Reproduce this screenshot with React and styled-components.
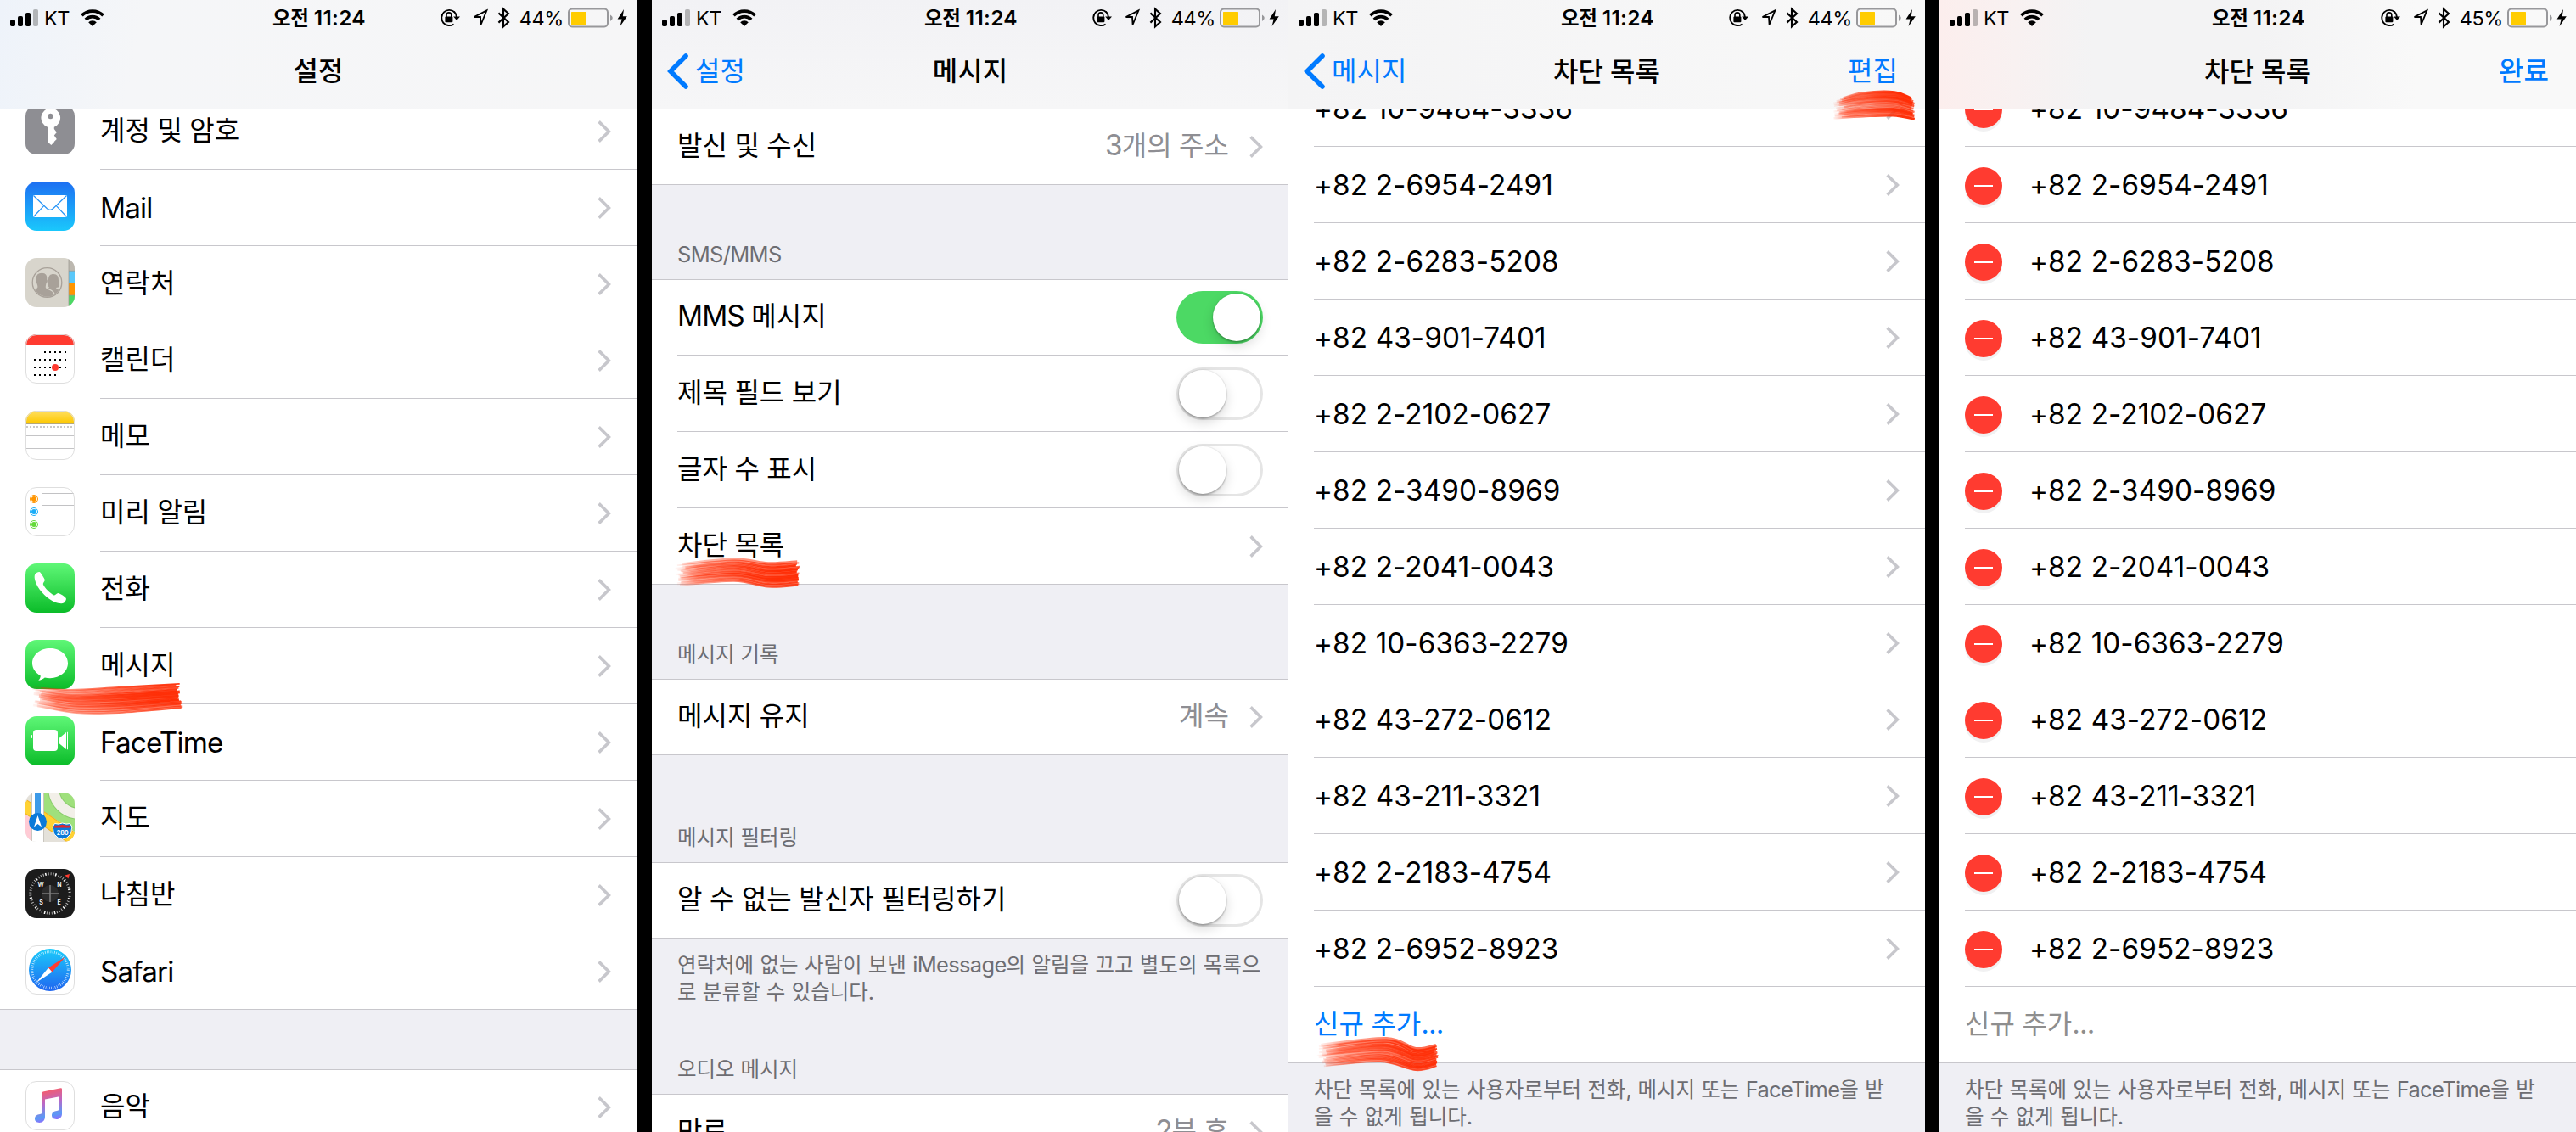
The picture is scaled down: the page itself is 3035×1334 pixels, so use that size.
import React from "react";
import styled, { createGlobalStyle, css } from "styled-components";

const GlobalStyle = createGlobalStyle`
  body { margin: 0; background: #000; overflow: hidden; }
  *, *::before, *::after { box-sizing: border-box; }
`;

const separator = "#c8c7cc";

const Board = styled.main`
  position: relative;
  display: grid;
  grid-template-columns: 750px 18px 750px 750px 17px 750px;
  width: 3035px;
  height: 1334px;
  overflow: hidden;
  background: #000;
  color: #000;
  font-family: Inter, "Noto Sans CJK KR", sans-serif;
  -webkit-font-smoothing: antialiased;
`;

const Phone = styled.section`
  grid-column: ${(p) => p.$column};
  display: flex;
  flex-direction: column;
  height: 1334px;
  overflow: hidden;
  background: #efeff4;
`;

const Header = styled.header`
  flex: none;
  display: flex;
  flex-direction: column;
  height: 129px;
  border-bottom: 1px solid ${(p) => p.$line || "#a9a9ac"};
  background: ${(p) => p.$tint};
  z-index: 1;
`;

const StatusRow = styled.div`
  display: grid;
  grid-template-columns: 1fr auto 1fr;
  height: 40px;
  padding: 0 10px 0 12px;
  align-items: center;
  font-size: 23.5px;
  line-height: 40px;
`;

const StatusSide = styled.div`
  display: flex;
  align-items: center;
  height: 40px;
  justify-content: ${(p) => (p.$end ? "flex-end" : "flex-start")};
  svg { flex: none; display: block; }
`;

const Carrier = styled.span`
  margin: 1px 13px 0 7px;
  font-size: 23.5px;
  letter-spacing: -0.6px;
`;

const Clock = styled.span`
  padding-top: 1px;
  font-weight: 600;
  font-size: 23.5px;
  white-space: nowrap;
`;

const Percent = styled.span`
  margin: 1px 5px 0 10px;
  letter-spacing: -0.4px;
  font-size: 23.5px;
`;

const NavRow = styled.div`
  display: grid;
  grid-template-columns: 1fr auto 1fr;
  align-items: center;
  height: 88px;
  padding: 0 32px 0 18px;
`;

const NavTitle = styled.h1`
  margin: 0 -7px 0 7px;
  font-size: 32px;
  font-weight: 500;
  line-height: 40px;
`;

const NavLink = styled.span`
  display: flex;
  align-items: center;
  gap: 8px;
  justify-self: ${(p) => (p.$end ? "end" : "start")};
  color: #007aff;
  font-size: 32px;
  line-height: 40px;
  font-weight: ${(p) => (p.$strong ? 500 : 400)};
`;

const Scroll = styled.div`
  flex: 1;
  min-height: 0;
  display: flex;
  flex-direction: column;
  overflow: hidden;
`;

const List = styled.div`
  flex: none;
  background: #fff;
  margin-top: ${(p) => p.$shift || 0}px;
  ${(p) => p.$ruled && css`box-shadow: inset 0 1px ${separator};`}
`;

const Row = styled.div`
  display: flex;
  height: 90px;
  padding-left: 30px;
  &:last-child { box-shadow: inset 0 -1px ${separator}; }
`;

const RowLead = styled.div`
  flex: none;
  width: ${(p) => p.$width}px;
  padding-top: ${(p) => p.$top}px;
  svg { display: block; }
`;

const RowBody = styled.div`
  flex: 1;
  display: flex;
  align-items: center;
  padding-right: 30px;
  box-shadow: inset 0 -1px ${separator};
  ${Row}:last-child & { box-shadow: none; }
`;

const Label = styled.span`
  flex: 1;
  font-size: 32px;
  line-height: 44px;
  white-space: nowrap;
  padding-bottom: ${(p) => (p.$plain ? 0 : 3)}px;
  color: ${(p) => p.$color || "#000"};
`;

const Value = styled.span`
  margin-right: 24px;
  padding-bottom: 3px;
  color: #8e8e93;
  font-size: 32px;
  line-height: 44px;
`;

const Gap = styled.div`
  flex: none;
  height: ${(p) => p.$height}px;
`;

const SectionHead = styled.h2`
  flex: none;
  display: flex;
  align-items: flex-end;
  height: ${(p) => p.$height}px;
  margin: 0;
  padding: 0 30px 13px;
  color: #6d6d72;
  font-size: 24.5px;
  font-weight: 400;
  line-height: 32px;
`;

const Note = styled.p`
  flex: none;
  height: ${(p) => p.$height}px;
  margin: 0;
  padding: 15px 0 0 30px;
  color: #6d6d72;
  font-size: 24.5px;
  line-height: 32px;
  word-spacing: 0.8px;
  white-space: nowrap;
`;

const Track = styled.span`
  flex: none;
  display: flex;
  justify-content: ${(p) => (p.$on ? "flex-end" : "flex-start")};
  width: 102px;
  height: 62px;
  padding: 3px;
  border-radius: 31px;
  background: ${(p) => (p.$on ? "#4cd964" : "#fff")};
  box-shadow: ${(p) => (p.$on ? "none" : "inset 0 0 0 3px #e5e5e5")};
`;

const Knob = styled.span`
  width: 56px;
  height: 56px;
  border-radius: 50%;
  background: #fff;
  box-shadow: 0 6px 14px rgba(0, 0, 0, 0.15), 0 2px 2px rgba(0, 0, 0, 0.2), 0 0 1px 1px rgba(0, 0, 0, 0.06);
`;

const Hangul = styled.span`
  letter-spacing: ${(p) => p.$spacing || "0"};
`;

const Latin = styled.span`
  font-size: 1.04em;
  letter-spacing: ${(p) => p.$spacing || "-0.026em"};
`;

const Annotations = styled.svg`
  position: absolute;
  inset: 0;
  z-index: 2;
  pointer-events: none;
`;

function Mixed({ text, latin, hangul }) {
  return text.split(/([가-힣]+)/).filter(Boolean).map((run, i) =>
    /[가-힣]/.test(run)
      ? <Hangul key={i} $spacing={hangul}>{run}</Hangul>
      : <Latin key={i} $spacing={latin}>{run}</Latin>
  );
}

/* ---------- status bar ---------- */

function Signal() {
  return (
    <svg width="33" height="20" viewBox="0 0 33 20">
      <rect x="0" y="12" width="6" height="8" rx="1.8" />
      <rect x="9" y="8" width="6" height="12" rx="1.8" />
      <rect x="18" y="4" width="6" height="16" rx="1.8" />
      <rect x="27" y="0" width="6" height="20" rx="1.8" opacity="0.26" />
    </svg>
  );
}

function Wifi() {
  return (
    <svg width="28" height="20" viewBox="0 0 28 20" fill="none" stroke="#000" strokeWidth="3.8">
      <path d="M1.4 7.2 A18 18 0 0 1 26.6 7.2" />
      <path d="M5.9 12 A11.6 11.6 0 0 1 22.1 12" />
      <path d="M14 20 L9.2 15.2 A6.8 6.8 0 0 1 18.8 15.2 Z" fill="#000" stroke="none" />
    </svg>
  );
}

function StatusIcons() {
  return (
    <svg width="84" height="26" viewBox="0 0 84 26">
      <path d="M17.4 6.2 A9.1 9.1 0 1 0 16.6 20.4" fill="none" stroke="#000" strokeWidth="1.9" />
      <path d="M17 5.8 A9.1 9.1 0 0 1 19.9 12" fill="none" stroke="#000" strokeWidth="1.9" />
      <path d="M16.2 11.6 H24 L20.1 16 Z" />
      <rect x="6.4" y="11.4" width="9" height="6.8" rx="1" />
      <path d="M8 12 V9.8 A2.9 2.9 0 0 1 13.8 9.8 V12" fill="none" stroke="#000" strokeWidth="1.6" />
      <path d="M55.4 4.4 L40.5 12 H48 L48.6 21 Z" fill="none" stroke="#000" strokeWidth="1.8" strokeLinejoin="miter" />
      <path d="M69.4 7.4 L81 18 L75 23.4 V2.6 L81 8 L69.4 18.6" fill="none" stroke="#000" strokeWidth="2.1" />
    </svg>
  );
}

function Battery() {
  return (
    <svg width="71" height="24" viewBox="0 0 71 24">
      <rect x="1" y="1.5" width="46" height="21" rx="4" fill="none" stroke="#98989b" strokeWidth="2" />
      <path d="M50 8.5 Q52.8 10 52.8 12.1 Q52.8 14.300 50 15.900 Z" fill="#98989b" />
      <rect x="4" y="5" width="18" height="15" rx="0.5" fill="#ffcc00" />
      <path d="M66 2 L58.6 13.400 H63.6 L61.6 22 L69.8 10.200 H64.8 Z" />
    </svg>
  );
}

function TopBar({ title, back, action, strong, percent, tint, line }) {
  return (
    <Header $tint={tint} $line={line}>
      <StatusRow>
        <StatusSide>
          <Signal />
          <Carrier>KT</Carrier>
          <Wifi />
        </StatusSide>
        <Clock><Mixed text="오전 11:24" latin="0.012em" hangul="-0.02em" /></Clock>
        <StatusSide $end>
          <StatusIcons />
          <Percent>{percent}%</Percent>
          <Battery />
        </StatusSide>
      </StatusRow>
      <NavRow>
        {back ? (
          <NavLink>
            <svg width="25" height="42" viewBox="0 0 25 42">
              <path d="M22 3 L4 21 L22 39" fill="none" stroke="#007aff" strokeWidth="5.6" strokeLinecap="round" strokeLinejoin="miter" />
            </svg>
            {back}
          </NavLink>
        ) : <span />}
        <NavTitle><Mixed text={title} /></NavTitle>
        {action ? <NavLink $end $strong={strong}>{action}</NavLink> : <span />}
      </NavRow>
    </Header>
  );
}

/* ---------- list pieces ---------- */

function Chevron() {
  return (
    <svg width="16" height="26" viewBox="0 0 16 26">
      <path d="M1.6 1.4 L13.4 13 L1.6 24.6" fill="none" stroke="#c7c7cc" strokeWidth="3.6" />
    </svg>
  );
}

function Toggle({ on }) {
  return <Track $on={on}><Knob /></Track>;
}

function Remove() {
  return (
    <svg width="48" height="54" viewBox="0 0 48 54">
      <circle cx="22" cy="26" r="22" fill="#f1f1f2" />
      <circle cx="22" cy="22" r="22" fill="#ff3b30" />
      <rect x="11" y="21" width="22" height="2" fill="#fff" />
    </svg>
  );
}

/* ---------- app icons ---------- */

const Tile = ({ fill, border, children }) => (
  <svg width="58" height="58" viewBox="0 0 58 58">
    <rect width="58" height="58" rx="13" fill={fill} />
    {children}
    {border && <rect x="0.5" y="0.5" width="57" height="57" rx="12.5" fill="none" stroke="#dedede" />}
  </svg>
);

const KeyIcon = () => (
  <Tile fill="#8e8e93">
    <path fillRule="evenodd" fill="#fff" d="M29.5 3.5 a11.5 11.5 0 0 1 4.3 22.2 V28 l3 4 -3 3.4 3 4.6 -3 3 v0.6 L30.3 47 26 43 V25.8 A11.5 11.5 0 0 1 29.5 3.5 Z M29.5 9.7 a3.3 3.3 0 1 0 0.01 0 Z" />
  </Tile>
);

const MailIcon = () => (
  <Tile fill="url(#mailBg)">
    <rect x="9" y="16" width="40" height="26" rx="1" fill="#fff" />
    <path d="M9.5 16.5 L25.4 31.8 Q29 35 32.6 31.8 L48.5 16.5 M9.5 41.5 L21.6 28.6 M48.5 41.5 L36.4 28.6" fill="none" stroke="#2694f7" strokeWidth="1.2" />
  </Tile>
);

const ContactsIcon = () => (
  <Tile fill="#d8d5cc">
    <g clipPath="url(#tileClip)">
      <rect x="51" y="0" width="7" height="15" fill="#bcb8b0" />
      <rect x="51" y="15" width="7" height="15" fill="#5ac8fa" />
      <rect x="51" y="29.5" width="7" height="15" fill="#ff9500" />
      <rect x="51" y="44" width="7" height="14" fill="#4cd964" />
      <path d="M51 0 V58 M51 15.3 H58 M51 29.5 H58 M51 44 H58" stroke="#98958c" strokeWidth="0.7" />
    </g>
    <g clipPath="url(#contactClip)" fill="#a8a199">
      <path d="M33 19 c4.500 0 6 3 6 7.500 0.200 3 1.200 5.600 0.800 7.800 l-3.800 0.600 c0.200 2 5 2.600 7 4.600 l-6 8 -14 1 -1 -10 c4 -1.600 5.600 -2.400 5.800 -4.200 l-1 -0.800 c-0.600 -2 0 -4.600 0.200 -8 0.200 -4.500 2 -6.500 6 -6.500 Z" />
      <path stroke="#d8d5cc" strokeWidth="1.4" d="M19.500 17 c5.200 0 6.800 3.400 6.400 8.200 1 1.500 0.300 3.800 -0.700 4.800 -0.700 3 -1 3.600 -0.600 5 1 1.800 7.600 2.600 9 6.500 l0 6 h-27 l-2 -10 c3 -0.800 8.400 -1.200 9 -3 0.300 -1.500 -0.300 -2 -0.900 -4.500 -1 -1 -1.700 -3.300 -0.700 -4.800 -0.400 -5.500 2.200 -8.200 7.500 -8.200 Z" />
    </g>
    <circle cx="25.5" cy="29" r="17.3" fill="none" stroke="#a8a199" strokeWidth="1.3" />
  </Tile>
);

const CalendarIcon = () => (
  <Tile fill="#fff" border>
    <path d="M0 13 A13 13 0 0 1 13 0 H45 A13 13 0 0 1 58 13 Z" fill="#ff3b30" />
    {[[20, 22, 5], [29, 10, 7], [38, 10, 7], [47, 10, 5]].map(([y, x, n]) =>
      Array.from({ length: n }, (_, i) => (
        <rect key={`${y}-${i}`} x={x + i * 6} y={y} width="2" height="2" fill="#000" />
      ))
    )}
    <circle cx="35" cy="39" r="4" fill="#ff3b30" />
  </Tile>
);

const NotesIcon = () => (
  <Tile fill="#fff" border>
    <path d="M0 15 V13 A13 13 0 0 1 13 0 H45 A13 13 0 0 1 58 13 V15 Z" fill="url(#noteBg)" />
    <path d="M0 15.5 H58" stroke="#b3a77c" />
    <path d="M1 19 H58" stroke="#c9c9c9" strokeWidth="2" strokeDasharray="2 2" />
    <path d="M0 29.5 H58 M0 44.5 H58" stroke="#c4c4c6" />
  </Tile>
);

const RemindersIcon = () => (
  <Tile fill="#fff" border>
    {[["#ff9500", 14], ["#1badf8", 29], ["#63da38", 44]].map(([c, y]) => (
      <g key={c}>
        <circle cx="10" cy={y} r="4.5" fill="none" stroke={c} />
        <circle cx="10" cy={y} r="3" fill={c} />
      </g>
    ))}
    <path d="M20 7.5 H57 M20 21.5 H58 M20 36.5 H58 M20 50.5 H57" stroke="#c2c2c4" />
  </Tile>
);

const PhoneIcon = () => (
  <Tile fill="url(#greenBg)">
    <path fill="#fff" d="M11.5 12.5 C13 10.600 15.500 9.700 17 10.200 C18.200 11 22 17 22.800 19.200 C22.800 21.500 20.400 22.500 20.800 24.500 C22.500 29 29 35.200 33.600 37.400 C35.500 37.800 36.300 35.400 38.400 35 C40.500 35.200 46.500 39 47.800 41 C48.400 42.500 47 45 45.200 46.600 C43 47.900 39 47.300 34.500 45.600 C26.500 42.200 17 33 13 24.500 C11 20 9.800 15 11.500 12.500 Z" />
  </Tile>
);

const MessagesIcon = () => (
  <Tile fill="url(#greenBg)">
    <path fill="#fff" d="M29 10 C40.700 10 50 17.800 50 27.600 C50 37.400 40.700 45.200 29 45.200 C26.800 45.200 24.800 45 22.800 44.500 C20.500 46.400 18 47.600 15.200 47.800 C16.800 46.400 17.600 44.600 17.800 42.500 C12 39.300 8 33.900 8 27.600 C8 17.800 17.300 10 29 10 Z" />
  </Tile>
);

const FaceTimeIcon = () => (
  <Tile fill="url(#greenBg)">
    <rect x="9" y="16" width="29" height="25" rx="4" fill="#fff" />
    <path d="M39 26.5 L48 19 V39 L39 31.5 Z M49 18.800 h1 v20.400 h-1 Z" fill="#fff" />
    <path d="M8 22 v4 a2 2 0 0 1 0 -4" fill="#fff" />
  </Tile>
);

const MapsIcon = () => (
  <Tile fill="#e4e1da">
    <g clipPath="url(#tileClip)">
      <path d="M21 0 H58 V46 L21 22 Z" fill="#9fe07c" />
      <path d="M33 -4 A31 31 0 0 0 62 25" fill="none" stroke="#8acb6c" strokeWidth="14" />
      <path d="M33 -4 A31 31 0 0 0 62 25" fill="none" stroke="#f2efe8" strokeWidth="12" />
      <path d="M-2 15 L60 57" fill="none" stroke="#f2b01c" strokeWidth="15" />
      <path d="M-2 15 L60 57" fill="none" stroke="#ffd233" strokeWidth="13" />
      <path d="M0 26 L8 31 V58 H0 Z" fill="#ffcbd5" />
      <path d="M7.5 0 V58 M21.5 0 V58" stroke="#c9c6bf" />
      <rect x="8" width="13" height="58" fill="#fff" />
      <rect x="11" width="7" height="30" fill="#3d9ae8" />
      <circle cx="14.5" cy="34.5" r="10.5" fill="#0a7ad9" />
      <path d="M14.5 27 L19 40.5 L14.5 37 L10 40.5 Z" fill="#fff" />
      <path d="M34.5 36.5 q4.5 1.5 9 -0.5 q4.5 2 9 0.5 l2.5 4 c-1.500 5 -0.500 6 -2.500 9 q-3 4.500 -9 5.500 q-6 -1 -9 -5.500 c-2 -3 -1 -4 -2.500 -9 Z" fill="#0a7ad9" stroke="#fff" strokeWidth="1" />
      <path d="M34.5 38.5 q4.5 1 9 -0.800 q4.5 1.800 9 0.800 l1 3 h-20 Z" fill="#e0262f" />
      <text x="43.7" y="49.5" textAnchor="middle" fontFamily="Inter" fontWeight="700" fontSize="7.2" fill="#fff">280</text>
    </g>
  </Tile>
);

const CompassIcon = () => (
  <Tile fill="#1c1c1c">
    <circle cx="29" cy="29" r="23.2" fill="none" stroke="#bdbdbd" strokeWidth="3" strokeDasharray="0.9 2.137" />
    <circle cx="29" cy="29" r="23.2" fill="none" stroke="#fff" strokeWidth="3.2" strokeDasharray="1.2 10.948" strokeDashoffset="-5.5" />
    <circle cx="29" cy="29" r="10" fill="#2b2b2b" />
    <path d="M29 19 V39 M19 29 H39" stroke="#7b7b7b" strokeWidth="1.6" />
    <path d="M46.5 7.5 L52 6 L50.5 11.5 Z" fill="#ff3b30" />
    <g fill="#fff" fontFamily="Inter" fontWeight="600" fontSize="7" textAnchor="middle">
      <text x="18" y="21">W</text>
      <text x="40" y="21">N</text>
      <text x="18.5" y="42">S</text>
      <text x="39.5" y="42">E</text>
    </g>
  </Tile>
);

const SafariIcon = () => (
  <Tile fill="#fff" border>
    <circle cx="29" cy="29" r="25" fill="url(#safariBg)" />
    <circle cx="29" cy="29" r="21.3" fill="none" stroke="#fff" strokeOpacity="0.8" strokeWidth="3" strokeDasharray="0.7 1.53" />
    <path d="M47 13.5 L31.5 31.5 L27 26.5 Z" fill="#ff3b30" />
    <path d="M12.5 44 L27 26.5 L31.5 31.5 Z" fill="#fff" />
  </Tile>
);

const MusicIcon = () => (
  <Tile fill="#fff" border>
    <path fill="url(#musicBg)" d="M20.5 12.5 L41.5 8.200 Q43 8 43 9.500 V38.500 C43 42.500 40.500 45 36.500 45 C33 45 31 43 31 40.300 C31 37 33.500 35.600 37 35 C39.500 34.500 40 34 40 32 V18.200 L23 21.600 V42 C23 46 20.500 49 16.500 49 C13 49 11 47 11 44.300 C11 41 13.500 39.600 17 39 C19.500 38.500 20 38 20 36 V13.200 Z" />
  </Tile>
);

const IconDefs = () => (
  <defs>
    <linearGradient id="mailBg" x1="0" y1="0" x2="0" y2="1"><stop offset="0" stopColor="#1d6ff2" /><stop offset="1" stopColor="#1ac8fc" /></linearGradient>
    <linearGradient id="greenBg" x1="0" y1="0" x2="0" y2="1"><stop offset="0" stopColor="#5ff777" /><stop offset="1" stopColor="#0bbc29" /></linearGradient>
    <linearGradient id="noteBg" x1="0" y1="0" x2="0" y2="1"><stop offset="0" stopColor="#ffdf62" /><stop offset="1" stopColor="#fdc800" /></linearGradient>
    <linearGradient id="safariBg" x1="0" y1="0" x2="0" y2="1"><stop offset="0" stopColor="#1bcbfb" /><stop offset="1" stopColor="#1f66f0" /></linearGradient>
    <linearGradient id="musicBg" gradientUnits="userSpaceOnUse" x1="20" y1="8" x2="30" y2="49"><stop offset="0.05" stopColor="#fb5b63" /><stop offset="0.45" stopColor="#b968c8" /><stop offset="0.8" stopColor="#5b9af5" /><stop offset="1" stopColor="#a35bff" /></linearGradient>
    <clipPath id="tileClip"><rect width="58" height="58" rx="13" /></clipPath>
    <clipPath id="contactClip"><circle cx="25.5" cy="29" r="16.5" /></clipPath>
  </defs>
);

/* ---------- red marker strokes ---------- */

const noise = (n) => {
  const v = Math.sin(n * 127.1 + 11.7) * 43758.5453;
  return v - Math.floor(v);
};

function curve(points) {
  let d = `M${points[0][0]} ${points[0][1]}`;
  for (let i = 0; i < points.length - 1; i++) {
    const p0 = points[Math.max(i - 1, 0)];
    const p1 = points[i];
    const p2 = points[i + 1];
    const p3 = points[Math.min(i + 2, points.length - 1)];
    d += ` C${p1[0] + (p2[0] - p0[0]) / 6} ${p1[1] + (p2[1] - p0[1]) / 6} ${p2[0] - (p3[0] - p1[0]) / 6} ${p2[1] - (p3[1] - p1[1]) / 6} ${p2[0]} ${p2[1]}`;
  }
  return d;
}

function Marker({ id, top, bottom, seed }) {
  const count = 19;
  const x0 = top[0][0];
  const x1 = top[top.length - 1][0];
  const blend = (t, jitter) =>
    top.map((p, i) => {
      const x = p[0] + (bottom[i][0] - p[0]) * t;
      const y = p[1] + (bottom[i][1] - p[1]) * t;
      if (i === 0) return [x + jitter * 14, y];
      if (i === top.length - 1) return [x - jitter * 5 + 4, y];
      return [x, y];
    });
  return (
    <g fill="none" stroke={`url(#${id})`}>
      <linearGradient id={id} gradientUnits="userSpaceOnUse" x1={x0} x2={x1} y1="0" y2="0">
        <stop offset="0" stopColor="#ff2d05" stopOpacity="0" />
        <stop offset="0.2" stopColor="#ff2d05" stopOpacity="0.5" />
        <stop offset="0.6" stopColor="#ff2d05" stopOpacity="0.85" />
        <stop offset="0.85" stopColor="#ff2d05" stopOpacity="1" />
      </linearGradient>
      {Array.from({ length: count }, (_, i) => (
        <path
          key={i}
          d={curve(blend(0.03 + (0.94 * i) / (count - 1), noise(seed + i)))}
          strokeWidth={1.6 + noise(seed + i + 40) * 2.2}
          opacity={0.6 + noise(seed + i + 80) * 0.4}
        />
      ))}
    </g>
  );
}

const markers = [
  { id: "markMessages", top: [[34, 809], [83, 812], [140, 809], [208, 805]], bottom: [[38, 833], [90, 841], [140, 841], [212, 835]] },
  { id: "markBlocked", top: [[793, 664], [865, 658], [905, 663], [939, 661]], bottom: [[796, 690], [865, 685], [905, 692], [938, 690]] },
  { id: "markEdit", top: [[2158, 115], [2195, 109], [2232, 108], [2252, 115]], bottom: [[2160, 140], [2195, 138], [2230, 137], [2252, 141]] },
  { id: "markAdd", top: [[1550, 1231], [1634, 1223], [1668, 1235], [1690, 1231]], bottom: [[1551, 1257], [1626, 1252], [1668, 1262], [1692, 1257]] },
];

/* ---------- data ---------- */

const apps = [
  ["계정 및 암호", KeyIcon], ["Mail", MailIcon], ["연락처", ContactsIcon], ["캘린더", CalendarIcon],
  ["메모", NotesIcon], ["미리 알림", RemindersIcon], ["전화", PhoneIcon], ["메시지", MessagesIcon],
  ["FaceTime", FaceTimeIcon], ["지도", MapsIcon], ["나침반", CompassIcon], ["Safari", SafariIcon],
];

const numbers = [
  "+82 10-9484-3336", "+82 2-6954-2491", "+82 2-6283-5208", "+82 43-901-7401",
  "+82 2-2102-0627", "+82 2-3490-8969", "+82 2-2041-0043", "+82 10-6363-2279",
  "+82 43-272-0612", "+82 43-211-3321", "+82 2-2183-4754", "+82 2-6952-8923",
];

const isPlain = (text) => !/[가-힣]/.test(text);

function AppRow({ name, icon: Icon }) {
  return (
    <Row>
      <RowLead $width={88} $top={14}><Icon /></RowLead>
      <RowBody>
        <Label $plain={isPlain(name)}><Mixed text={name} /></Label>
        <Chevron />
      </RowBody>
    </Row>
  );
}

function SettingRow({ name, value, toggle }) {
  return (
    <Row>
      <RowBody>
        <Label><Mixed text={name} /></Label>
        {value && <Value><Mixed text={value} /></Value>}
        {toggle ? <Toggle on={toggle === "on"} /> : <Chevron />}
      </RowBody>
    </Row>
  );
}

const BlockNote = () => (
  <Note $height={81}>
    <Mixed text="차단 목록에 있는 사용자로부터 전화, 메시지 또는 FaceTime을 받" /><br />
    <Mixed text="을 수 없게 됩니다." />
  </Note>
);

function BlockedList({ editing }) {
  return (
    <Scroll>
      <List $shift={-46}>
        {numbers.map((n) => (
          <Row key={n}>
            <RowBody>
              {editing && <RowLead $width={76} $top={12}><Remove /></RowLead>}
              <Label $plain><Mixed text={n} latin="0.003em" /></Label>
              {!editing && <Chevron />}
            </RowBody>
          </Row>
        ))}
        <Row>
          <RowBody>
            <Label $color={editing ? "#8e8e8e" : "#007aff"}><Mixed text="신규 추가..." /></Label>
          </RowBody>
        </Row>
      </List>
      <BlockNote />
    </Scroll>
  );
}

export default function App() {
  return (
    <Board>
      <GlobalStyle />
      <Phone $column={1}>
        <TopBar title="설정" percent={44} tint="linear-gradient(100deg, #eef3fa 0%, #f5f6f8 22%, #f6f6f7 100%)" />
        <Scroll>
          <List $shift={-19}>
            {apps.map(([name, icon]) => <AppRow key={name} name={name} icon={icon} />)}
          </List>
          <Gap $height={70} />
          <List $ruled><AppRow name="음악" icon={MusicIcon} /></List>
        </Scroll>
      </Phone>
      <Phone $column={3}>
        <TopBar title="메시지" back="설정" percent={44} tint="linear-gradient(#f2f2f5, #f6f6f7)" line="#8f8f94" />
        <Scroll>
          <List $shift={-1}><SettingRow name="발신 및 수신" value="3개의 주소" /></List>
          <SectionHead $height={111}><Mixed text="SMS/MMS" /></SectionHead>
          <List $ruled>
            <SettingRow name="MMS 메시지" toggle="on" />
            <SettingRow name="제목 필드 보기" toggle="off" />
            <SettingRow name="글자 수 표시" toggle="off" />
            <SettingRow name="차단 목록" />
          </List>
          <SectionHead $height={111}>메시지 기록</SectionHead>
          <List $ruled><SettingRow name="메시지 유지" value="계속" /></List>
          <SectionHead $height={126}>메시지 필터링</SectionHead>
          <List $ruled><SettingRow name="알 수 없는 발신자 필터링하기" toggle="off" /></List>
          <Note $height={92}>
            <Mixed text="연락처에 없는 사람이 보낸 iMessage의 알림을 끄고 별도의 목록으" /><br />
            <Mixed text="로 분류할 수 있습니다." />
          </Note>
          <SectionHead $height={91}>오디오 메시지</SectionHead>
          <List $ruled><SettingRow name="만료" value="2분 후" /></List>
        </Scroll>
      </Phone>
      <Phone $column={4}>
        <TopBar title="차단 목록" back="메시지" action="편집" percent={44} tint="linear-gradient(90deg, #f4f4f5, #f8f8f8)" />
        <BlockedList />
      </Phone>
      <Phone $column={6}>
        <TopBar title="차단 목록" action="완료" strong percent={45} tint="linear-gradient(90deg, #fceeed 0%, #f8f1f1 12%, #f3f3f4 24%, #f3f3f4 50%, #f9f9f9 75%)" />
        <BlockedList editing />
      </Phone>
      <Annotations width="3035" height="1334" viewBox="0 0 3035 1334">
        <IconDefs />
        {markers.map((m, i) => <Marker key={m.id} {...m} seed={i * 23 + 3} />)}
      </Annotations>
    </Board>
  );
}
